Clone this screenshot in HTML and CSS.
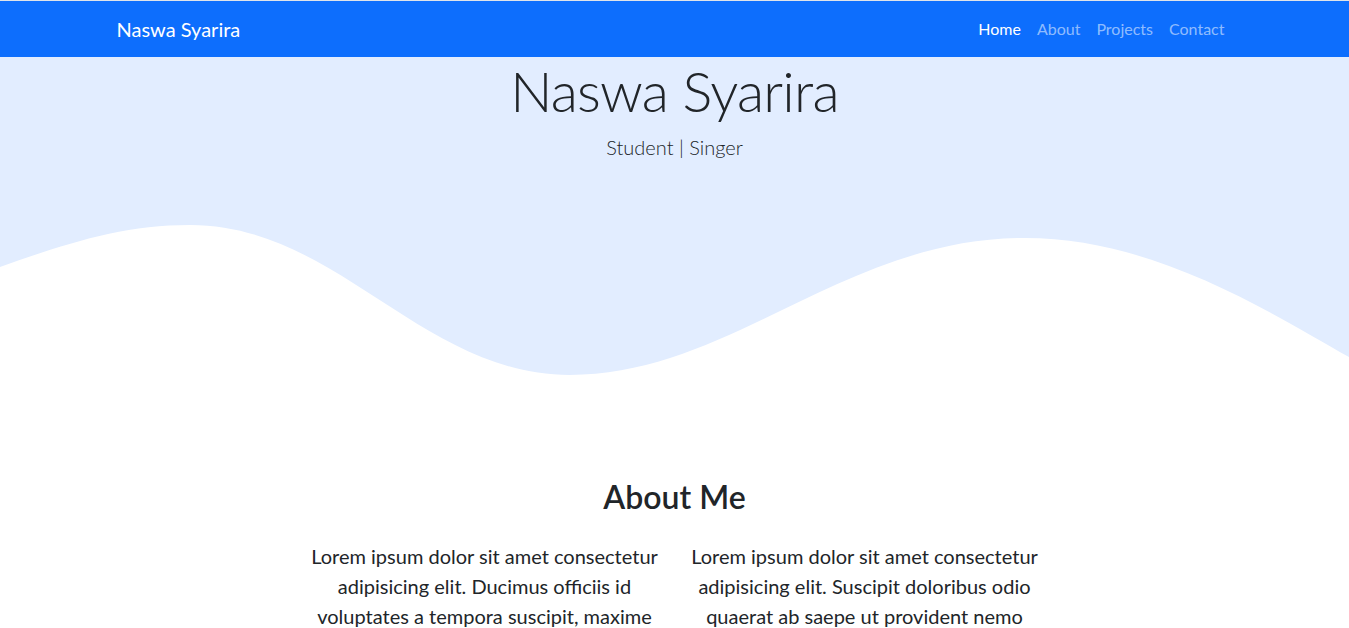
FILE: index.html
```html
<!DOCTYPE html>
<html lang="en">
<head>
<meta charset="utf-8">
<title>Naswa Syarira</title>
<link rel="stylesheet" href="styles.css">
</head>
<body>
<nav class="navbar">
  <div class="container nav-inner">
    <a class="brand" href="#">Naswa Syarira</a>
    <ul class="nav-links">
      <li><a class="active" href="#">Home</a></li>
      <li><a href="#about">About</a></li>
      <li><a href="#projects">Projects</a></li>
      <li><a href="#contact">Contact</a></li>
    </ul>
  </div>
</nav>
<header class="hero">
  <h1 class="hero-title">Naswa Syarira</h1>
  <p class="hero-lead">Student | Singer</p>
  <svg class="wave" viewBox="0 0 1440 320" preserveAspectRatio="none" xmlns="http://www.w3.org/2000/svg">
    <path fill="#ffffff" d="M0,95 C70,70 130,50 203,50 C360,50 450,210 608,210 C780,210 900,64 1094,64 C1230,64 1350,140 1440,191 L1440,320 L0,320 Z"/>
  </svg>
</header>
<section class="about" id="about">
  <div class="container">
    <h2 class="section-title">About Me</h2>
    <div class="about-row">
      <p class="about-col">Lorem ipsum dolor sit amet consectetur adipisicing elit. Ducimus officiis id voluptates a tempora suscipit, maxime quibusdam quos eveniet voluptatem.</p>
      <p class="about-col">Lorem ipsum dolor sit amet consectetur adipisicing elit. Suscipit doloribus odio quaerat ab saepe ut provident nemo voluptas tempora ipsam.</p>
    </div>
  </div>
</section>
</body>
</html>
```
FILE: styles.css
```css
* { box-sizing: border-box; }
html, body { margin: 0; padding: 0; }
body {
  font-family: "Lato", "Open Sans", sans-serif;
  font-size: 16px;
  line-height: 1.5;
  color: #212529;
  background: #ffffff;
  border-top: 1px solid #dfe4ea;
}
.container {
  width: 1140px;
  margin: 0 auto;
  padding: 0 12px;
}
.navbar {
  background: #0d6efd;
  height: 56px;
}
.nav-inner {
  height: 100%;
  display: flex;
  align-items: center;
  justify-content: space-between;
}
.brand {
  color: #fff;
  text-decoration: none;
  font-size: 20px;
  font-weight: 400;
}
.nav-links {
  list-style: none;
  margin: 0;
  padding: 0;
  display: flex;
}
.nav-links a {
  display: block;
  padding: 8px;
  color: rgba(255,255,255,0.55);
  text-decoration: none;
  font-size: 16px;
}
.nav-links a.active { color: #fff; }
.hero {
  background: #e2edff;
  text-align: center;
}
.hero-title {
  margin: 0 0 8px;
  font-size: 56px;
  font-weight: 300;
  line-height: 1.2;
  letter-spacing: -0.8px;
}
.hero-lead {
  margin: 0 0 16px;
  font-size: 20px;
  font-weight: 300;
  line-height: 1.5;
}
.wave {
  display: block;
  width: 100%;
  height: 300px;
}
.section-title {
  text-align: center;
  font-size: 32px;
  font-weight: 600;
  line-height: 1.2;
  margin: 0 0 24px;
}
.about-row {
  display: flex;
  justify-content: center;
}
.about-col {
  width: 380px;
  padding: 0 12px;
  margin: 0;
  text-align: center;
  font-size: 20px;
  line-height: 1.5;
}
```
